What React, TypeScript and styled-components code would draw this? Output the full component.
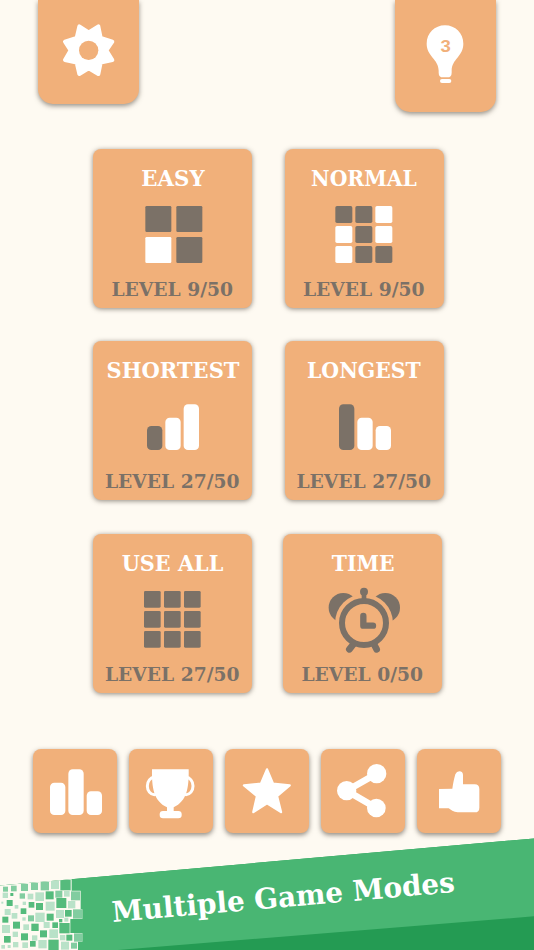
import React from "react";
import styled, { createGlobalStyle } from "styled-components";

const ORANGE = "#f1b07a";
const GRAY = "#7b7167";
const CREAM = "#fefaf2";

const GlobalStyle = createGlobalStyle`
  * { box-sizing: border-box; }
  body { margin: 0; background: ${CREAM}; }
`;

const Screen = styled.main`
  width: 534px;
  height: 950px;
  overflow: hidden;
  display: flex;
  flex-direction: column;
  background: ${CREAM};
  font-family: "DejaVu Serif", serif;
  font-weight: 700;
`;

const TopBar = styled.header`
  display: flex;
  justify-content: space-between;
  align-items: flex-start;
  height: 149px;
  padding: 0 38px;
`;

const HangingTab = styled.button<{ $height: number }>`
  width: 101px;
  height: ${(p) => p.$height}px;
  padding: 0;
  border: 0;
  border-radius: 0 0 15px 15px;
  background: ${ORANGE};
  box-shadow: 0 2px 5px rgba(70, 60, 50, 0.55);
  display: flex;
  justify-content: center;
  align-items: flex-start;
`;

const TabIcon = styled.svg<{ $top: number }>`
  display: block;
  margin-top: ${(p) => p.$top}px;
  fill: #fff;
`;

const ModeGrid = styled.section`
  display: grid;
  grid-template-columns: 159px 159px;
  grid-auto-rows: 159px;
  gap: 33.3px 32.5px;
  padding-left: 93.3px;
`;

const ModeCard = styled.article<{ $shift: number }>`
  margin-left: ${(p) => p.$shift}px;
  width: 159px;
  height: 159px;
  border-radius: 8px;
  background: ${ORANGE};
  box-shadow: 0 1px 5px rgba(70, 60, 50, 0.6);
  display: flex;
  flex-direction: column;
  align-items: center;
`;

const ModeTitle = styled.h2<{ $stretch: number }>`
  margin: 0;
  height: 50px;
  padding-top: 15px;
  font-size: 21.5px;
  line-height: 30px;
  white-space: nowrap;
  color: #fff;
  transform: scaleX(${(p) => p.$stretch});
`;

const ModeArt = styled.svg`
  display: block;
  flex: none;
`;

const ModeLevel = styled.p`
  margin: 0;
  padding: 5px 1px 0 0;
  font-size: 18.7px;
  line-height: 26px;
  white-space: nowrap;
  color: ${GRAY};
`;

const ActionBar = styled.nav`
  display: flex;
  justify-content: space-between;
  margin-top: 56.4px;
  padding: 0 33px 0 33.3px;
`;

const ActionButton = styled.button`
  width: 83.7px;
  height: 83.7px;
  padding: 0;
  border: 0;
  border-radius: 8px;
  background: ${ORANGE};
  box-shadow: 0 2px 5px rgba(70, 60, 50, 0.6);
`;

const ActionIcon = styled.svg`
  display: block;
  fill: #fff;
`;

const Banner = styled.footer`
  flex: none;
  margin-top: auto;
  height: 113px;
  background: #249b53;
  clip-path: polygon(0 48.5px, 100% 1.4px, 100% 100%, 0 100%);
`;

const BannerFace = styled.div`
  height: 113px;
  background: #49b673;
  clip-path: polygon(0 0, 100% 0, 100% 79.3px, 118px 100%, 118px 113px, 0 113px);
  display: flex;
  align-items: flex-start;
`;

const Mosaic = styled.svg`
  display: block;
  flex: none;
  margin-top: 28px;
`;

const BannerText = styled.div`
  margin: 55px 0 0 -18px;
  font-size: 28.5px;
  line-height: 40px;
  color: #fff;
  white-space: nowrap;
  transform-origin: 0 50%;
  transform: rotate(-5deg) scaleX(0.978);
`;

type Cell = [number, number, number, number, string];

function Blocks({ cells, r }: { cells: Cell[]; r: number }) {
  return (
    <>
      {cells.map(([x, y, w, h, fill], i) => (
        <rect key={i} x={x} y={y} width={w} height={h} rx={r} fill={fill} />
      ))}
    </>
  );
}

function tiles(pattern: string, origin: number, size: number, step: number): Cell[] {
  return pattern.split("/").flatMap((row, j) =>
    row.split("").map(
      (c, i): Cell => [origin + i * step, 198 + j * step, size, size, c === "w" ? "#fff" : GRAY]
    )
  );
}

const clock = (
  <g fill={GRAY} stroke="none" transform="translate(5 0)">
    <circle cx="202" cy="248" r="44" />
    <circle cx="328" cy="248" r="44" />
    <circle cx="264" cy="294" r="87" fill={ORANGE} />
    <path d="M257 208H271V225H257Z" />
    <circle cx="264" cy="200" r="12" />
    <path d="M235 354L220 373M292 354L302 373" stroke={GRAY} strokeWidth="20" strokeLinecap="round" />
    <circle cx="264" cy="294" r="66" fill={ORANGE} stroke={GRAY} strokeWidth="18" />
    <path d="M262 273V302H291" fill="none" stroke={GRAY} strokeWidth="19" strokeLinecap="round" strokeLinejoin="round" />
  </g>
);

const modes = [
  { title: "EASY", level: "LEVEL 9/50", stretch: 0.99, shift: 0,
    art: <Blocks r={4} cells={tiles("gg/wg", 183, 78, 93)} /> },
  { title: "NORMAL", level: "LEVEL 9/50", stretch: 0.945, shift: 0,
    art: <Blocks r={5} cells={tiles("ggw/wgw/wgg", 177, 51, 60)} /> },
  { title: "SHORTEST", level: "LEVEL 27/50", stretch: 0.978, shift: 0,
    art: <Blocks r={13} cells={[[188, 282, 46, 72, GRAY], [243, 257, 46, 97, "#fff"], [298, 217, 46, 137, "#fff"]]} /> },
  { title: "LONGEST", level: "LEVEL 27/50", stretch: 0.95, shift: 0,
    art: <Blocks r={13} cells={[[188, 217, 46, 137, GRAY], [243, 257, 46, 97, "#fff"], [298, 282, 46, 72, "#fff"]]} /> },
  { title: "USE ALL", level: "LEVEL 27/50", stretch: 0.968, shift: 0,
    art: <Blocks r={4} cells={tiles("ggg/ggg/ggg", 179, 50, 60)} /> },
  { title: "TIME", level: "LEVEL 0/50", stretch: 0.947, shift: -1.5, art: clock },
];

const actions = [
  {
    label: "Scores",
    icon: (
      <>
        <rect x="51" y="100" width="46" height="97" rx="13" />
        <rect x="106" y="60" width="46" height="137" rx="13" />
        <rect x="161" y="126" width="46" height="71" rx="13" />
      </>
    ),
  },
  {
    label: "Trophies",
    icon: (
      <>
        <path d="M69 60H179C180 115 174 156 134 174V187H114V174C74 156 68 115 69 60Z" />
        <rect x="92" y="185" width="66" height="22" rx="10" />
        <ellipse cx="76" cy="110" rx="21" ry="26" fill="none" stroke="#fff" strokeWidth="9" />
        <ellipse cx="171" cy="110" rx="21" ry="26" fill="none" stroke="#fff" strokeWidth="9" />
      </>
    ),
  },
  {
    label: "Favourites",
    icon: (
      <path
        d="M126 60L144 103L194 108L156 140L168 188L126 162L85 188L96 140L57 108L108 103Z"
        stroke="#fff" strokeWidth="7" strokeLinejoin="round"
      />
    ),
  },
  {
    label: "Share",
    icon: (
      <>
        <path d="M167 73L77 124L167 176" fill="none" stroke="#fff" strokeWidth="20" />
        <circle cx="167" cy="73" r="29" />
        <circle cx="77" cy="124" r="29" />
        <circle cx="166" cy="176" r="28" />
      </>
    ),
  },
  {
    label: "Like",
    icon: (
      <path d="M66 119L106 118C108 104 111 88 115 75Q119 66 127 66Q138 67 138 77V105H173Q187 105 187 119V175Q187 189 173 189H122Q113 188 106 184L95 177H66Z" />
    ),
  },
];

const D = "#55bb7c";
const M = "#82cda0";
const L = "#b9e2c8";
const mosaic: [number, number, number, string][] = [
  [9, 65, 15, M], [33, 62, 17, M], [63, 57, 21, M], [93, 54, 21, M], [122, 51, 25, M], [153, 48, 24, L], [181, 45, 31, D],
  [8, 83, 16, L], [31, 84, 9, D], [59, 85, 16, M], [83, 86, 17, L], [106, 82, 26, L], [137, 79, 24, D], [166, 77, 21, M], [192, 78, 17, L], [213, 79, 27, M],
  [4, 110, 6, L], [20, 105, 18, D], [44, 120, 11, L], [68, 110, 10, L], [86, 111, 17, D], [108, 114, 21, D], [137, 110, 27, L], [169, 99, 30, D], [204, 108, 22, L],
  [14, 132, 18, L], [35, 144, 17, L], [62, 130, 17, D], [7, 155, 18, D], [67, 157, 10, L], [84, 151, 18, M], [106, 143, 28, L], [140, 146, 21, D], [168, 135, 24, L], [195, 135, 20, D], [219, 133, 28, M],
  [6, 180, 24, L], [39, 170, 21, D], [70, 178, 17, L], [94, 176, 22, D], [131, 171, 18, L], [157, 172, 17, D], [177, 162, 10, D], [193, 158, 12, L], [178, 174, 31, D],
  [12, 213, 20, D], [38, 200, 16, L], [63, 205, 21, D], [96, 211, 16, L], [120, 196, 21, D], [148, 193, 26, L], [180, 210, 16, L], [199, 209, 18, D], [222, 205, 25, M],
  [4, 240, 11, L], [23, 240, 9, L], [39, 231, 16, L], [67, 232, 17, L], [90, 228, 17, D], [115, 225, 25, L], [145, 224, 31, D], [183, 230, 24, L], [213, 233, 18, M],
];

export default function App() {
  return (
    <>
      <GlobalStyle />
      <Screen>
        <TopBar>
          <HangingTab $height={104} aria-label="Settings">
            <TabIcon $top={23} width="54" height="54" viewBox="96 69 162 162">
              <path
                stroke="#fff" strokeWidth="12" strokeLinejoin="round"
                d="M148 79L176 97L205 79L212 114L247 125L229 151L247 180L212 188L205 222L176 205L148 222L140 188L105 180L122 151L105 125L140 114Z"
              />
              <circle cx="176" cy="151" r="29" fill={ORANGE} />
            </TabIcon>
          </HangingTab>
          <HangingTab $height={112} aria-label="Hints">
            <TabIcon $top={24} width="40" height="60" viewBox="127 71 120 180">
              <path d="M184 75C153 75 129 99 129 130C129 168 165 176 165 211V217Q165 231 178 231H191Q204 231 204 217V211C204 176 239 168 239 130C239 99 215 75 184 75Z" />
              <rect x="169" y="236" width="34" height="12" rx="6" />
              <text x="186" y="156" fill={ORANGE} fontFamily="Liberation Sans, sans-serif" fontSize="49" fontWeight="700" textAnchor="middle" textLength="31" lengthAdjust="spacingAndGlyphs">3</text>
            </TabIcon>
          </HangingTab>
        </TopBar>
        <ModeGrid>
          {modes.map((m) => (
            <ModeCard key={m.title} $shift={m.shift}>
              <ModeTitle $stretch={m.stretch}>{m.title}</ModeTitle>
              <ModeArt width="159" height="72" viewBox="26 177 477 216">{m.art}</ModeArt>
              <ModeLevel>{m.level}</ModeLevel>
            </ModeCard>
          ))}
        </ModeGrid>
        <ActionBar>
          {actions.map((a) => (
            <ActionButton key={a.label} aria-label={a.label}>
              <ActionIcon width="83.7" height="83.7" viewBox="0 -1 251 251">{a.icon}</ActionIcon>
            </ActionButton>
          ))}
        </ActionBar>
        <Banner>
          <BannerFace>
            <Mosaic width="130" height="85" viewBox="0 0 390 255">
              <path d="M0 50L215 36V77H242V133H247V162H211V204H247V230H234V255H0Z" fill={CREAM} />
              {mosaic.map(([x, y, s, fill], i) => (
                <rect key={i} x={x} y={y} width={s} height={s} fill={fill} />
              ))}
            </Mosaic>
            <BannerText>Multiple Game Modes</BannerText>
          </BannerFace>
        </Banner>
      </Screen>
    </>
  );
}
